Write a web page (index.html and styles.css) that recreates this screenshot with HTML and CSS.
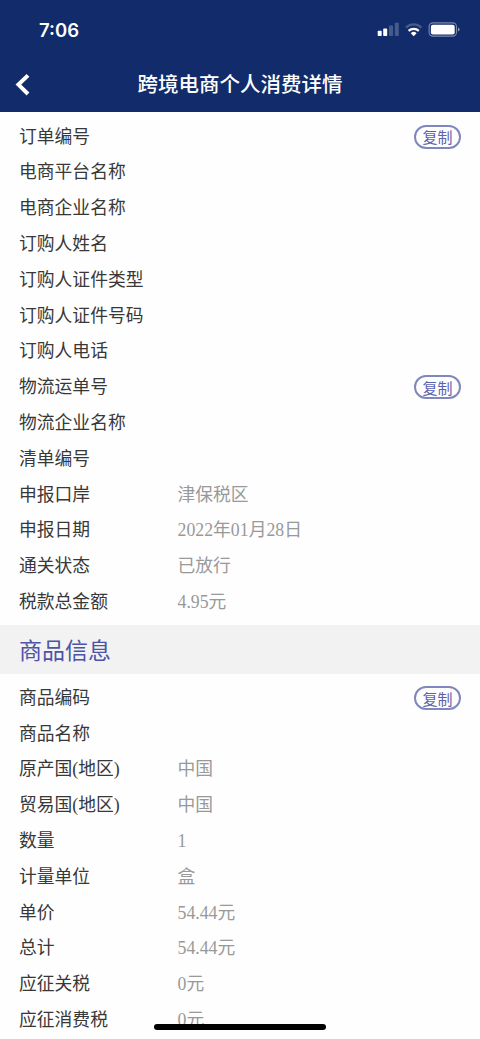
FILE: index.html
```html
<!DOCTYPE html>
<html lang="zh-CN">
<head>
<meta charset="utf-8">
<meta name="viewport" content="width=device-width, initial-scale=1">
<title>跨境电商个人消费详情</title>
<link rel="stylesheet" href="styles.css">
</head>
<body>
<div class="screen">
  <header class="header">
    <div class="status">
      <span class="time">7:06</span>
      <svg class="status-icons" width="84" height="18" viewBox="0 0 84 18">
        <g fill="#fff">
          <rect x="0.7" y="9.7" width="4" height="5.3" rx="0.8"/>
          <rect x="6.2" y="7.6" width="4" height="7.4" rx="0.8"/>
          <rect x="12" y="4.6" width="4" height="10.4" rx="0.8" opacity=".22"/>
          <rect x="17.8" y="1.8" width="4" height="13.2" rx="0.8" opacity=".22"/>
          <path d="M33.8 12.2a4.2 4.2 0 0 1 5.8 0l-2.9 3z"/>
        </g>
        <path d="M31.6 9.9a7.3 7.3 0 0 1 10.2 0" fill="none" stroke="#fff" stroke-width="2.2"/>
        <path d="M29 6.6a11 11 0 0 1 15.4 0" fill="none" stroke="#fff" stroke-width="2.2" opacity=".22"/>
        <rect x="52.1" y="1.9" width="27.4" height="13.2" rx="3.8" fill="none" stroke="#fff" stroke-width="1.1" opacity=".45"/>
        <rect x="53.9" y="3.7" width="23.8" height="9.7" rx="2" fill="#fff"/>
        <path d="M81 6.4q1.6.5 1.6 2.1T81 10.6z" fill="#fff" opacity=".5"/>
      </svg>
    </div>
    <div class="navbar">
      <svg class="back" width="16" height="24" viewBox="0 0 16 24"><path d="M14 2.4 4.4 11.6l9.6 9.4" fill="none" stroke="#fff" stroke-width="4"/></svg>
      <h1 class="title">跨境电商个人消费详情</h1>
    </div>
  </header>
  <section class="list">
    <div class="row"><span class="label">订单编号</span><button class="copy">复制</button></div>
    <div class="row"><span class="label">电商平台名称</span></div>
    <div class="row"><span class="label">电商企业名称</span></div>
    <div class="row"><span class="label">订购人姓名</span></div>
    <div class="row"><span class="label">订购人证件类型</span></div>
    <div class="row"><span class="label">订购人证件号码</span></div>
    <div class="row"><span class="label">订购人电话</span></div>
    <div class="row"><span class="label">物流运单号</span><button class="copy">复制</button></div>
    <div class="row"><span class="label">物流企业名称</span></div>
    <div class="row"><span class="label">清单编号</span></div>
    <div class="row"><span class="label">申报口岸</span><span class="value">津保税区</span></div>
    <div class="row"><span class="label">申报日期</span><span class="value">2022年01月28日</span></div>
    <div class="row"><span class="label">通关状态</span><span class="value">已放行</span></div>
    <div class="row"><span class="label">税款总金额</span><span class="value">4.95元</span></div>
  </section>
  <h2 class="section-title">商品信息</h2>
  <section class="list goods">
    <div class="row"><span class="label">商品编码</span><button class="copy">复制</button></div>
    <div class="row"><span class="label">商品名称</span></div>
    <div class="row"><span class="label">原产国(地区)</span><span class="value">中国</span></div>
    <div class="row"><span class="label">贸易国(地区)</span><span class="value">中国</span></div>
    <div class="row"><span class="label">数量</span><span class="value">1</span></div>
    <div class="row"><span class="label">计量单位</span><span class="value">盒</span></div>
    <div class="row"><span class="label">单价</span><span class="value">54.44元</span></div>
    <div class="row"><span class="label">总计</span><span class="value">54.44元</span></div>
    <div class="row"><span class="label">应征关税</span><span class="value">0元</span></div>
    <div class="row"><span class="label">应征消费税</span><span class="value">0元</span></div>
  </section>
  <div class="home-indicator"></div>
</div>
</body>
</html>
```

FILE: styles.css
```css
* { box-sizing: border-box; }

body {
  margin: 0;
  background: #fefefe;
  font-family: "Liberation Serif", "Noto Sans CJK SC", serif;
}

.screen {
  position: relative;
  width: 480px;
  height: 1039px;
  overflow: hidden;
}

.header {
  height: 112px;
  background: #122c6b;
  color: #fff;
}

.status {
  display: flex;
  justify-content: space-between;
  align-items: center;
  height: 57px;
  padding: 0 19px 0 39px;
}

.time {
  padding-top: 2px;
  font: 600 18.5px/24px Inter, sans-serif;
}

.status-icons,
.back {
  display: block;
}

.status-icons { margin-top: 3px; }

.navbar {
  display: grid;
  grid-template-columns: 40px 1fr 40px;
  align-items: center;
  height: 55px;
}

.back { margin-left: 14px; }

.title {
  margin: 0;
  padding-bottom: 3px;
  font: 500 20.5px/30px "Noto Sans CJK SC", sans-serif;
  text-align: center;
  white-space: nowrap;
}

.list {
  padding: 6px 19px 0;
}

.row {
  display: grid;
  grid-template-columns: 158.5px 1fr auto;
  align-items: center;
  height: 35.8px;
  font-size: 17.8px;
  line-height: 26px;
  white-space: nowrap;
}

.label,
.value { padding-top: 1.6px; }

.label { color: #383838; }

.value { color: #999; }

.copy {
  grid-column: 3;
  width: 47px;
  height: 24px;
  margin: 2px 0 0;
  padding: 0;
  border: 2px solid #8087bd;
  border-radius: 12px;
  background: none;
  color: #5a62ad;
  font: 15px/19px "Noto Sans CJK SC", sans-serif;
}

.section-title {
  height: 49px;
  margin: 6px 0 0;
  padding: 2px 0 0 19px;
  background: #f2f2f2;
  color: #4c54a8;
  font-size: 23px;
  font-weight: 400;
  line-height: 49px;
}

.goods { padding-top: 5px; }

.home-indicator {
  position: absolute;
  left: 154px;
  top: 1024px;
  width: 172px;
  height: 6px;
  border-radius: 3px;
  background: #000;
}
```
